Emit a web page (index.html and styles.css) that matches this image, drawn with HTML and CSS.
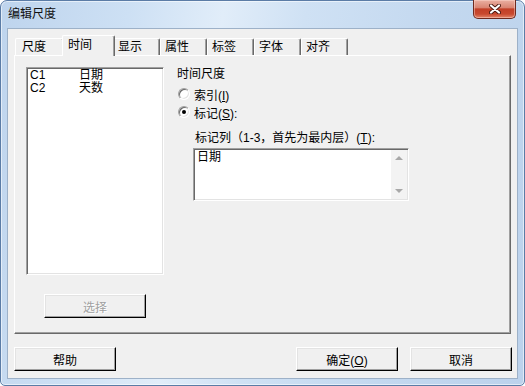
FILE: index.html
```html
<!DOCTYPE html>
<html lang="zh-CN">

<head>
    <meta charset="UTF-8">
    <meta name="viewport" content="width=device-width, initial-scale=1.0">
    <title>编辑尺度</title>
    <link rel="stylesheet" href="styles.css">
</head>

<body>
    <div class="window">
        <div class="titlebar">
            <span class="title">编辑尺度</span>
            <button class="close" aria-label="关闭">
                <svg width="12" height="10" viewBox="0 0 12 10">
                    <path d="M2 1.5 L10 8.5 M10 1.5 L2 8.5" stroke="#4a1810" stroke-width="4" stroke-linecap="round" />
                    <path d="M2 1.5 L10 8.5 M10 1.5 L2 8.5" stroke="#fff" stroke-width="2.2" stroke-linecap="round" />
                </svg>
            </button>
        </div>
        <div class="client">
            <div class="tabs">
                <div class="tab first">尺度</div>
                <div class="tab active">时间</div>
                <div class="tab">显示</div>
                <div class="tab">属性</div>
                <div class="tab">标签</div>
                <div class="tab">字体</div>
                <div class="tab">对齐</div>
            </div>
            <div class="page">
                <div class="left">
                    <div class="listbox">
                        <div class="row"><span class="col">C1</span><span>日期</span></div>
                        <div class="row"><span class="col">C2</span><span>天数</span></div>
                    </div>
                    <button class="btn select" disabled>选择</button>
                </div>
                <div class="right">
                    <div class="group-label">时间尺度</div>
                    <div class="radio"><span class="dot"></span><span>索引(<u>I</u>)</span></div>
                    <div class="radio checked"><span class="dot"></span><span>标记(<u>S</u>):</span></div>
                    <div class="field-label">标记列（1-3，首先为最内层）(<u>T</u>):</div>
                    <div class="textbox">
                        <div class="text">日期</div>
                        <div class="scrollbar">
                            <span class="arrow up"></span>
                            <span class="arrow down"></span>
                        </div>
                    </div>
                </div>
            </div>
            <div class="footer">
                <button class="btn">帮助</button>
                <button class="btn ok">确定(<u>O</u>)</button>
                <button class="btn">取消</button>
            </div>
        </div>
    </div>
</body>

</html>
```

FILE: styles.css
```css
* {
    margin: 0;
    padding: 0;
    box-sizing: border-box;
}

body {
    background: #fff;
    font-family: "Liberation Sans", "Noto Sans CJK SC", sans-serif;
    font-size: 12px;
    color: #000;
}

u {
    text-decoration: underline;
    text-underline-offset: 1px;
}

.window {
    width: 525px;
    height: 386px;
    display: flex;
    flex-direction: column;
    padding: 0 6px 6px 6px;
    border: 1px solid #5b7ca6;
    border-radius: 7px 7px 5px 5px;
    background: linear-gradient(100deg, #bed4ed 0%, #cde0f4 22%, #e1edf9 38%, #cfe1f4 52%, #c3d8ef 75%, #bcd2ec 100%);
    box-shadow: inset 0 0 0 1px rgba(255, 255, 255, 0.55);
}

.titlebar {
    height: 27px;
    display: flex;
    align-items: flex-start;
}

.title {
    padding: 6px 0 0 1px;
    line-height: 14px;
    color: #111;
}

.close {
    margin: -1px 2px 0 auto;
    width: 43px;
    height: 19px;
    display: flex;
    align-items: center;
    justify-content: center;
    border: 1px solid #6e2a1f;
    border-top: none;
    border-radius: 0 0 5px 5px;
    background: linear-gradient(#eab0a2 0%, #d98573 42%, #c23f27 50%, #c8492f 78%, #e3866a 100%);
    box-shadow: inset 0 0 0 1px rgba(255, 220, 210, 0.45);
}

.client {
    flex: 1;
    display: flex;
    flex-direction: column;
    border: 1px solid #9db1c8;
    background: #f0f0f0;
}

.tabs {
    height: 26px;
    display: flex;
    align-items: flex-end;
    padding-left: 7px;
}

.tab {
    width: 47px;
    height: 17px;
    padding-left: 4px;
    line-height: 17px;
    border-top: 1px solid #fff;
    border-left: 1px solid #fff;
    border-right: 1px solid #696969;
    border-radius: 2px 2px 0 0;
    box-shadow: inset -1px 0 0 #a0a0a0;
}

.tab.first {
    width: 49px;
    padding-left: 6px;
}

.tab.active {
    width: 53px;
    height: 21px;
    line-height: 18px;
    margin: 0 -2px -1px -2px;
    padding-left: 5px;
    background: #f0f0f0;
    z-index: 1;
}

.page {
    height: 279px;
    margin: 0 6px;
    display: flex;
    padding: 11px 0 0 11px;
    border-top: 1px solid #fff;
    border-left: 1px solid #fff;
    border-right: 1px solid #696969;
    border-bottom: 1px solid #696969;
    box-shadow: inset -1px -1px 0 #a0a0a0;
}

.left {
    display: flex;
    flex-direction: column;
}

.listbox {
    width: 138px;
    height: 208px;
    background: #fff;
    border: 1px solid;
    border-color: #a0a0a0 #fff #fff #a0a0a0;
    box-shadow: inset 1px 1px 0 #696969, inset -1px -1px 0 #e3e3e3;
    padding: 1px 0 0 3px;
}

.row {
    display: flex;
    line-height: 13px;
    height: 13px;
}

.col {
    width: 49px;
}

.btn {
    width: 102px;
    height: 24px;
    font-family: inherit;
    font-size: 12px;
    color: #000;
    background: #f0f0f0;
    border: 1px solid;
    border-color: #fff #000 #000 #fff;
    box-shadow: inset -1px -1px 0 #a0a0a0, inset 1px 1px 0 #e3e3e3;
}

.btn.select {
    margin: 19px 0 0 18px;
    color: #a0a0a0;
    text-shadow: 1px 1px 0 #fff;
}

.right {
    margin-left: 13px;
    display: flex;
    flex-direction: column;
}

.group-label {
    height: 14px;
    line-height: 14px;
}

.radio {
    height: 18px;
    display: flex;
    align-items: center;
    gap: 4px;
    padding-left: 1px;
}

.group-label + .radio {
    margin-top: 4px;
}

.dot {
    position: relative;
    width: 12px;
    height: 12px;
    border-radius: 50%;
    background: #fff;
    border: 1px solid;
    border-color: #a0a0a0 #fff #fff #a0a0a0;
    box-shadow: inset 1px 1px 0 #696969, inset -1px -1px 0 #e3e3e3;
}

.radio.checked .dot::after {
    content: "";
    position: absolute;
    left: 3px;
    top: 3px;
    width: 4px;
    height: 4px;
    border-radius: 50%;
    background: #000;
}

.field-label {
    margin: 10px 0 0 18px;
    height: 14px;
    line-height: 14px;
}

.textbox {
    margin: 3px 0 0 16px;
    width: 216px;
    height: 53px;
    display: flex;
    background: #fff;
    border: 1px solid;
    border-color: #a0a0a0 #fff #fff #a0a0a0;
    box-shadow: inset 1px 1px 0 #696969, inset -1px -1px 0 #e3e3e3;
    padding: 1px;
}

.text {
    flex: 1;
    padding: 1px 0 0 2px;
    line-height: 13px;
}

.scrollbar {
    width: 16px;
    display: flex;
    flex-direction: column;
    justify-content: space-between;
    background: #f3f3f3;
}

.arrow {
    height: 16px;
    display: flex;
    align-items: center;
    justify-content: center;
}

.arrow::after {
    content: "";
    border-left: 4px solid transparent;
    border-right: 4px solid transparent;
}

.arrow.up::after {
    border-bottom: 4px solid #a8a8a8;
}

.arrow.down::after {
    border-top: 4px solid #a8a8a8;
}

.footer {
    display: flex;
    gap: 12px;
    padding: 13px 5px 0 6px;
}

.btn.ok {
    margin-left: auto;
}
```
